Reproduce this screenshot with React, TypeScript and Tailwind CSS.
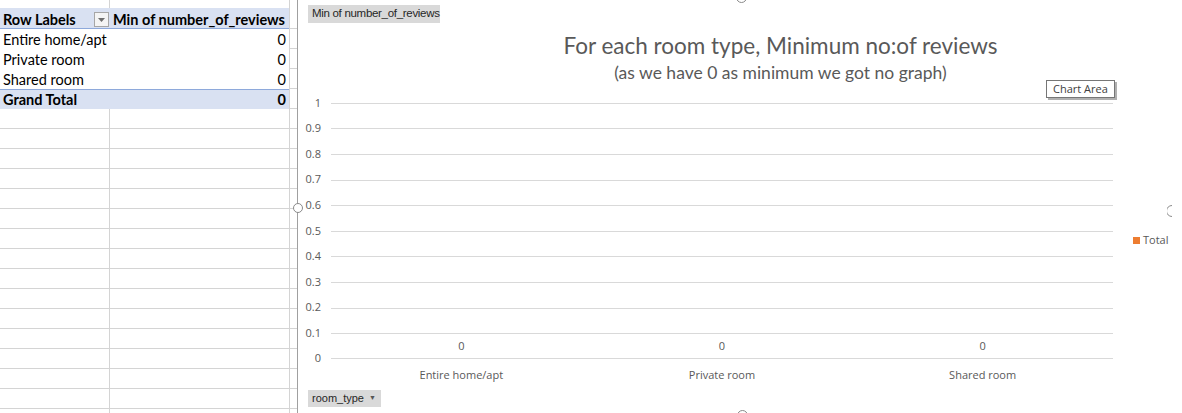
const GRID = 'border-[#d4d4d4]';

const PIVOT_ROWS = [
  { label: 'Entire home/apt', value: '0' },
  { label: 'Private room', value: '0' },
  { label: 'Shared room', value: '0' },
];

const Y_TICKS = ['1', '0.9', '0.8', '0.7', '0.6', '0.5', '0.4', '0.3', '0.2', '0.1', '0'];
const CATEGORIES = ['Entire home/apt', 'Private room', 'Shared room'];

function ColC({ bottom = true }: { bottom?: boolean }) {
  return <div className={`w-[7px] shrink-0 ${bottom ? `border-b ${GRID}` : ''}`} />;
}

function Sheet() {
  return (
    <div className="flex w-[297px] shrink-0 flex-col font-['Lato',sans-serif] text-[14.5px] text-black">
      {/* partial row above the pivot */}
      <div className="flex h-[8px] shrink-0">
        <div className={`w-[110px] border-r ${GRID}`} />
        <div className={`w-[180px] border-r ${GRID}`} />
        <ColC bottom={false} />
      </div>

      {/* pivot header */}
      <div className="flex h-[21px] shrink-0">
        <div className={`flex w-[290px] items-center border-r ${GRID}`}>
          <div className="flex h-full w-[290px] items-center border-b border-[#8ea9db] bg-[#d9e1f2] pt-[3px] font-bold">
            <div className="flex w-[110px] items-center pl-[3px] pr-[1px]">
              <span>Row Labels</span>
              <span className="ml-auto flex h-[15px] w-[15px] items-center justify-center border border-[#a6a6a6] bg-[#f4f4f4]">
                <svg width="7" height="4" viewBox="0 0 7 4">
                  <path d="M0 0h7L3.5 4z" fill="#6e6e6e" />
                </svg>
              </span>
            </div>
            <div className="pl-[3px]">Min of number_of_reviews</div>
          </div>
        </div>
        <ColC />
      </div>

      {PIVOT_ROWS.map(r => (
        <div key={r.label} className="flex h-[20px] shrink-0">
          <div className={`flex w-[290px] items-center border-r pt-[1px] ${GRID}`}>
            <div className="w-[110px] pl-[3px]">{r.label}</div>
            <div className="w-[179px] pr-[3px] text-right">{r.value}</div>
          </div>
          <ColC />
        </div>
      ))}

      {/* grand total */}
      <div className="flex h-[20px] shrink-0">
        <div className={`flex w-[290px] items-center border-r ${GRID}`}>
          <div className="flex h-full w-[290px] items-center border-t border-[#8ea9db] bg-[#d9e1f2] font-bold">
            <div className="w-[110px] pl-[3px]">Grand Total</div>
            <div className="w-[179px] pr-[3px] text-right">0</div>
          </div>
        </div>
        <ColC />
      </div>

      {Array.from({ length: 16 }).map((_, i) => (
        <div key={i} className="flex h-[20px] shrink-0">
          <div className={`w-[110px] border-b border-r ${GRID}`} />
          <div className={`w-[180px] border-b border-r ${GRID}`} />
          <ColC />
        </div>
      ))}
    </div>
  );
}

function Chart() {
  return (
    <div className="h-full w-[966px] shrink-0 border-l border-[#a0a0a0] font-['Open_Sans',sans-serif] text-[#595959]">
      <div className="flex flex-col">
        {/* value field button */}
        <div className="ml-[10px] mt-[5px] flex h-[18px] w-[132px] items-center whitespace-nowrap bg-[#d9d9d9] px-[4px] font-['Liberation_Sans',sans-serif] text-[11.5px] tracking-[-0.3px] text-[#262626]">
          Min of number_of_reviews
        </div>

        {/* title */}
        <div className="mt-[9px] text-center font-['Lato',sans-serif] text-[22.5px] leading-[27px]">
          For each room type, Minimum no:of reviews
        </div>
        <div className="mt-[3px] text-center font-['Lato',sans-serif] text-[17.5px] leading-[21px]">
          (as we have 0 as minimum we got no graph)
        </div>

        {/* plot */}
        <div className="mt-[7px] flex items-start">
          <div className="flex w-[23px] flex-col text-right text-[11px]">
            {Y_TICKS.map(t => (
              <div key={t} className="flex h-[25.6px] items-center justify-end">{t}</div>
            ))}
          </div>

          <div className="ml-[10px] mt-[12.8px] flex w-[782px] flex-col">
            {Y_TICKS.slice(0, 9).map(t => (
              <div key={t} className="h-[25.6px] border-t border-[#d9d9d9]" />
            ))}
            <div className="grid h-[25.6px] grid-cols-3 items-center border-y border-[#d9d9d9] text-center text-[11px]">
              {CATEGORIES.map(c => <div key={c}>0</div>)}
            </div>
            <div className="mt-[8px] grid h-[16px] grid-cols-3 items-center text-center text-[11px]">
              {CATEGORIES.map(c => <div key={c}>{c}</div>)}
            </div>
          </div>

          {/* legend */}
          <div className="ml-[20px] mt-[143px] flex h-[14px] items-center gap-[3px] text-[11px]">
            <span className="h-[7px] w-[7px] bg-[#ed7d31]" />
            <span>Total</span>
          </div>
        </div>

        {/* axis field button */}
        <div className="ml-[10px] mt-[7px] flex h-[17px] w-[73px] items-center whitespace-nowrap bg-[#d9d9d9] px-[4px] font-['Liberation_Sans',sans-serif] text-[11px] text-[#262626]">
          <span>room_type</span>
          <span className="ml-[5px] text-[7px] text-[#555]">▼</span>
        </div>
      </div>
    </div>
  );
}

export default function App() {
  return (
    <div className="relative flex h-[413px] w-[1182px] overflow-hidden bg-white">
      <Sheet />
      <Chart />

      {/* selection handles */}
      <div className="absolute left-[293px] top-[203px] h-[10px] w-[10px] rounded-full border border-[#8a8a8a] bg-white" />
      <div className="absolute left-[736px] top-[-8px] h-[11px] w-[11px] rounded-full border border-[#8a8a8a] bg-white" />
      <div className="absolute left-[737px] top-[410px] h-[11px] w-[11px] rounded-full border border-[#8a8a8a] bg-white" />
      <svg className="absolute left-[1167px] top-[205px]" width="6" height="12" viewBox="0 0 6 12">
        <path d="M5 0.5A5.5 5.5 0 0 0 5 11.5" fill="none" stroke="#8a8a8a" />
      </svg>

      {/* tooltip */}
      <div className="absolute left-[1046px] top-[80px] flex h-[18px] items-center border border-[#767676] bg-white px-[6px] font-['Open_Sans',sans-serif] text-[11px] text-[#404040] shadow-[2px_2px_0_#b0b0b0]">
        Chart Area
      </div>
    </div>
  );
}
